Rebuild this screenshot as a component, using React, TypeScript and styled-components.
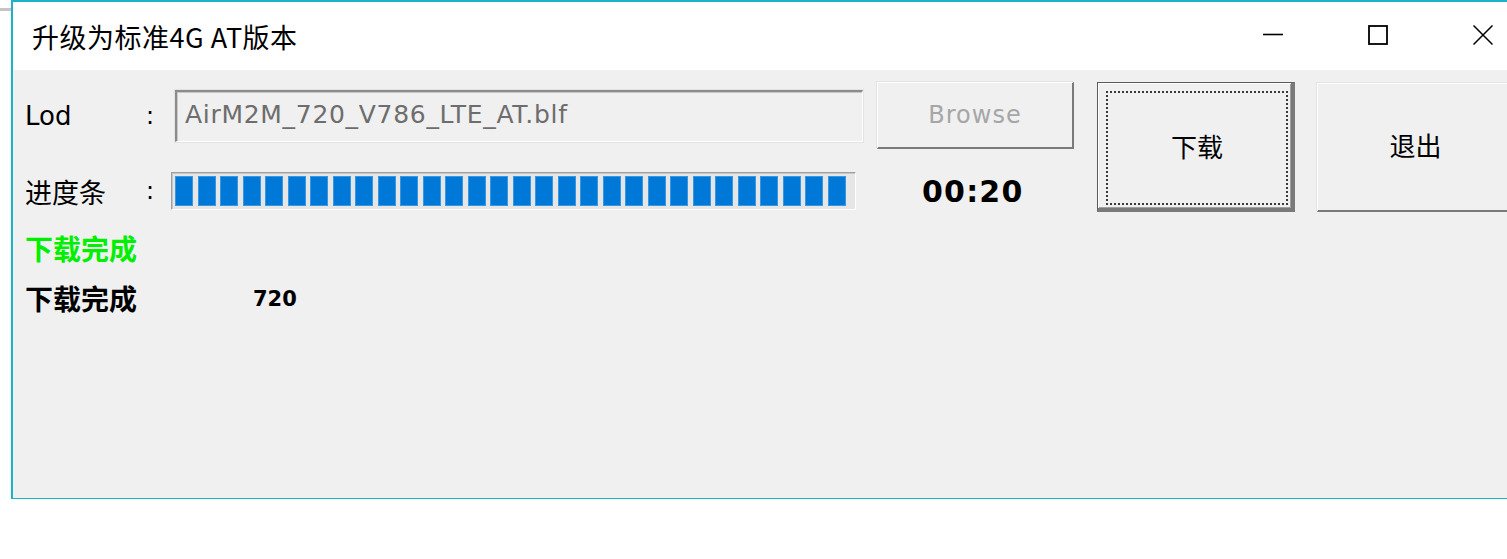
import React from "react";
import styled, { createGlobalStyle } from "styled-components";

const GlobalStyle = createGlobalStyle`
  html, body {
    margin: 0;
    padding: 0;
    background: #ffffff;
    overflow: hidden;
  }
  body {
    font-family: "DejaVu Sans", "Noto Sans CJK SC", sans-serif;
  }
`;

const TEAL = "#1cb4c4";
const CJK = `"Noto Sans CJK SC", "DejaVu Sans", sans-serif`;
const LATIN = `"DejaVu Sans", "Noto Sans CJK SC", sans-serif`;

const Page = styled.div`
  display: flex;
  align-items: flex-start;
  width: 1507px;
  height: 559px;
`;

const BackEdge = styled.div`
  flex: 0 0 11px;
  height: 3px;
  margin-top: 8px;
  background: #c4c4c4;
`;

const Window = styled.div`
  flex: 0 0 1526px;
  height: 499px;
  box-sizing: border-box;
  display: flex;
  flex-direction: column;
  border-top: 2px solid ${TEAL};
  border-left: 2px solid ${TEAL};
  border-bottom: 1px solid ${TEAL};
`;

const TitleBar = styled.div`
  height: 68px;
  flex: 0 0 68px;
  background: #ffffff;
  display: flex;
  align-items: center;
`;

const Title = styled.div`
  padding-left: 19px;
  padding-top: 1px;
  font-family: ${CJK};
  font-size: 27px;
  letter-spacing: 0.5px;
  color: #000;
  white-space: nowrap;
`;

const Controls = styled.div`
  margin-left: auto;
  align-self: stretch;
  display: flex;
  padding-right: 2px;
`;

const CaptionButton = styled.div`
  width: 105px;
  display: flex;
  align-items: center;
  justify-content: center;
  padding-bottom: 3px;
  box-sizing: border-box;
`;

const Body = styled.div`
  flex: 1;
  background: #f0f0f0;
  padding: 12px 0 0 12px;
  display: flex;
  align-items: flex-start;
  gap: 23px;
`;

const LeftCol = styled.div`
  display: flex;
  flex-direction: column;
`;

const Row = styled.div<{ $h: number; $mt?: number }>`
  display: flex;
  align-items: center;
  height: ${(p) => p.$h}px;
  margin-top: ${(p) => p.$mt ?? 0}px;
`;

const Label = styled.div<{ $cjk?: boolean }>`
  width: 121px;
  font-family: ${(p) => (p.$cjk ? CJK : LATIN)};
  font-size: ${(p) => (p.$cjk ? 27 : 26)}px;
  color: #000;
  white-space: nowrap;
`;

const Colon = styled.div<{ $w: number }>`
  width: ${(p) => p.$w}px;
  font-family: ${LATIN};
  font-size: 24px;
  color: #000;
`;

const Field = styled.div`
  width: 688px;
  height: 52px;
  box-sizing: border-box;
  border-style: solid;
  border-width: 2px 1px 1px 2px;
  border-color: #8c8c8c #ffffff #ffffff #8c8c8c;
  box-shadow: inset 1px 1px 0 #c8c8c8, 0 0 0 1px #e3e3e3;
  background: #f0f0f0;
  display: flex;
  align-items: center;
  padding: 0 0 4px 8px;
  font-family: ${LATIN};
  font-size: 25px;
  letter-spacing: 0.7px;
  color: #6d6d6d;
  white-space: nowrap;
`;

const BrowseButton = styled.div`
  margin-left: 14px;
  width: 197px;
  height: 67px;
  box-sizing: border-box;
  border-style: solid;
  border-width: 1px 2px 2px 1px;
  border-color: #ffffff #7a7a7a #7a7a7a #ffffff;
  box-shadow: -1px -1px 0 #e3e3e3;
  background: #f0f0f0;
  display: flex;
  align-items: center;
  justify-content: center;
  font-family: ${LATIN};
  font-size: 24px;
  letter-spacing: 1px;
  color: #a6a6a6;
`;

const Progress = styled.div`
  width: 685px;
  height: 38px;
  box-sizing: border-box;
  border-style: solid;
  border-width: 1px;
  border-color: #a0a0a0 #ffffff #ffffff #a0a0a0;
  box-shadow: inset 1px 1px 0 #c6c6c6;
  background: #e6e6e6;
  padding: 3px;
  display: flex;
  gap: 4.5px;
`;

const Segment = styled.div`
  width: 18px;
  height: 30px;
  background: #0078d7;
  box-shadow: inset 0 0 0 1px #3897e2;
`;

const Time = styled.div`
  margin-left: 66px;
  font-family: ${LATIN};
  font-weight: bold;
  font-size: 30px;
  letter-spacing: 1.2px;
  color: #000;
`;

const StatusLine = styled.div<{ $color: string; $mt?: number }>`
  display: flex;
  align-items: center;
  height: 50px;
  margin-top: ${(p) => p.$mt ?? 0}px;
  font-family: ${CJK};
  font-weight: bold;
  font-size: 28px;
  color: ${(p) => p.$color};
`;

const StatusLabel = styled.div`
  width: 228px;
  white-space: nowrap;
`;

const StatusValue = styled.div`
  font-family: ${LATIN};
  font-weight: bold;
  font-size: 21px;
  padding-top: 2px;
`;

const BigButtons = styled.div`
  display: flex;
  gap: 22px;
  align-items: flex-start;
`;

const DefaultButton = styled.div`
  width: 198px;
  height: 130px;
  box-sizing: border-box;
  border-style: solid;
  border-width: 1px 4px 4px 1px;
  border-color: #5a5a5a #7a7a7a #7a7a7a #5a5a5a;
  box-shadow: inset 1px 1px 0 #ffffff, inset -1px -1px 0 #a0a0a0;
  background: #f0f0f0;
  padding: 8px 3px 3px 8px;
  display: flex;
`;

const FocusRect = styled.div`
  flex: 1;
  border: 2px dotted #3a3a3a;
  display: flex;
  align-items: center;
  justify-content: center;
  font-family: ${CJK};
  font-size: 26px;
  color: #000;
  padding-bottom: 5px;
`;

const PlainButton = styled.div`
  width: 198px;
  height: 129px;
  margin-top: 1px;
  box-sizing: border-box;
  border-style: solid;
  border-width: 1px 2px 2px 1px;
  border-color: #ffffff #7a7a7a #7a7a7a #ffffff;
  box-shadow: -1px -1px 0 #e3e3e3;
  background: #f0f0f0;
  display: flex;
  align-items: center;
  justify-content: center;
  padding-bottom: 5px;
  font-family: ${CJK};
  font-size: 26px;
  color: #000;
`;

const MinimizeIcon = () => (
  <svg width="20" height="20" viewBox="0 0 20 20">
    <line x1="0" y1="9.5" x2="20" y2="9.5" stroke="#000" strokeWidth="1.6" />
  </svg>
);

const MaximizeIcon = () => (
  <svg width="20" height="20" viewBox="0 0 20 20">
    <rect x="1" y="1" width="18" height="18" fill="none" stroke="#000" strokeWidth="1.8" />
  </svg>
);

const CloseIcon = () => (
  <svg width="20" height="20" viewBox="0 0 20 20">
    <path d="M0.5 0.5 L19.5 19.5 M19.5 0.5 L0.5 19.5" stroke="#000" strokeWidth="1.5" fill="none" />
  </svg>
);

export default function App() {
  const segments = Array.from({ length: 30 }, (_, i) => i);
  return (
    <>
      <GlobalStyle />
      <Page>
        <BackEdge />
        <Window>
          <TitleBar>
            <Title>升级为标准4G AT版本</Title>
            <Controls>
              <CaptionButton>
                <MinimizeIcon />
              </CaptionButton>
              <CaptionButton>
                <MaximizeIcon />
              </CaptionButton>
              <CaptionButton>
                <CloseIcon />
              </CaptionButton>
            </Controls>
          </TitleBar>
          <Body>
            <LeftCol>
              <Row $h={67}>
                <Label>Lod</Label>
                <Colon $w={29}>:</Colon>
                <Field>AirM2M_720_V786_LTE_AT.blf</Field>
                <BrowseButton>Browse</BrowseButton>
              </Row>
              <Row $h={38} $mt={23}>
                <Label $cjk>进度条</Label>
                <Colon $w={25}>:</Colon>
                <Progress>
                  {segments.map((i) => (
                    <Segment key={i} />
                  ))}
                </Progress>
                <Time>00:20</Time>
              </Row>
              <StatusLine $color="#00f000" $mt={13}>
                <StatusLabel>下载完成</StatusLabel>
              </StatusLine>
              <StatusLine $color="#000000">
                <StatusLabel>下载完成</StatusLabel>
                <StatusValue>720</StatusValue>
              </StatusLine>
            </LeftCol>
            <BigButtons>
              <DefaultButton>
                <FocusRect>下载</FocusRect>
              </DefaultButton>
              <PlainButton>退出</PlainButton>
            </BigButtons>
          </Body>
        </Window>
      </Page>
    </>
  );
}
